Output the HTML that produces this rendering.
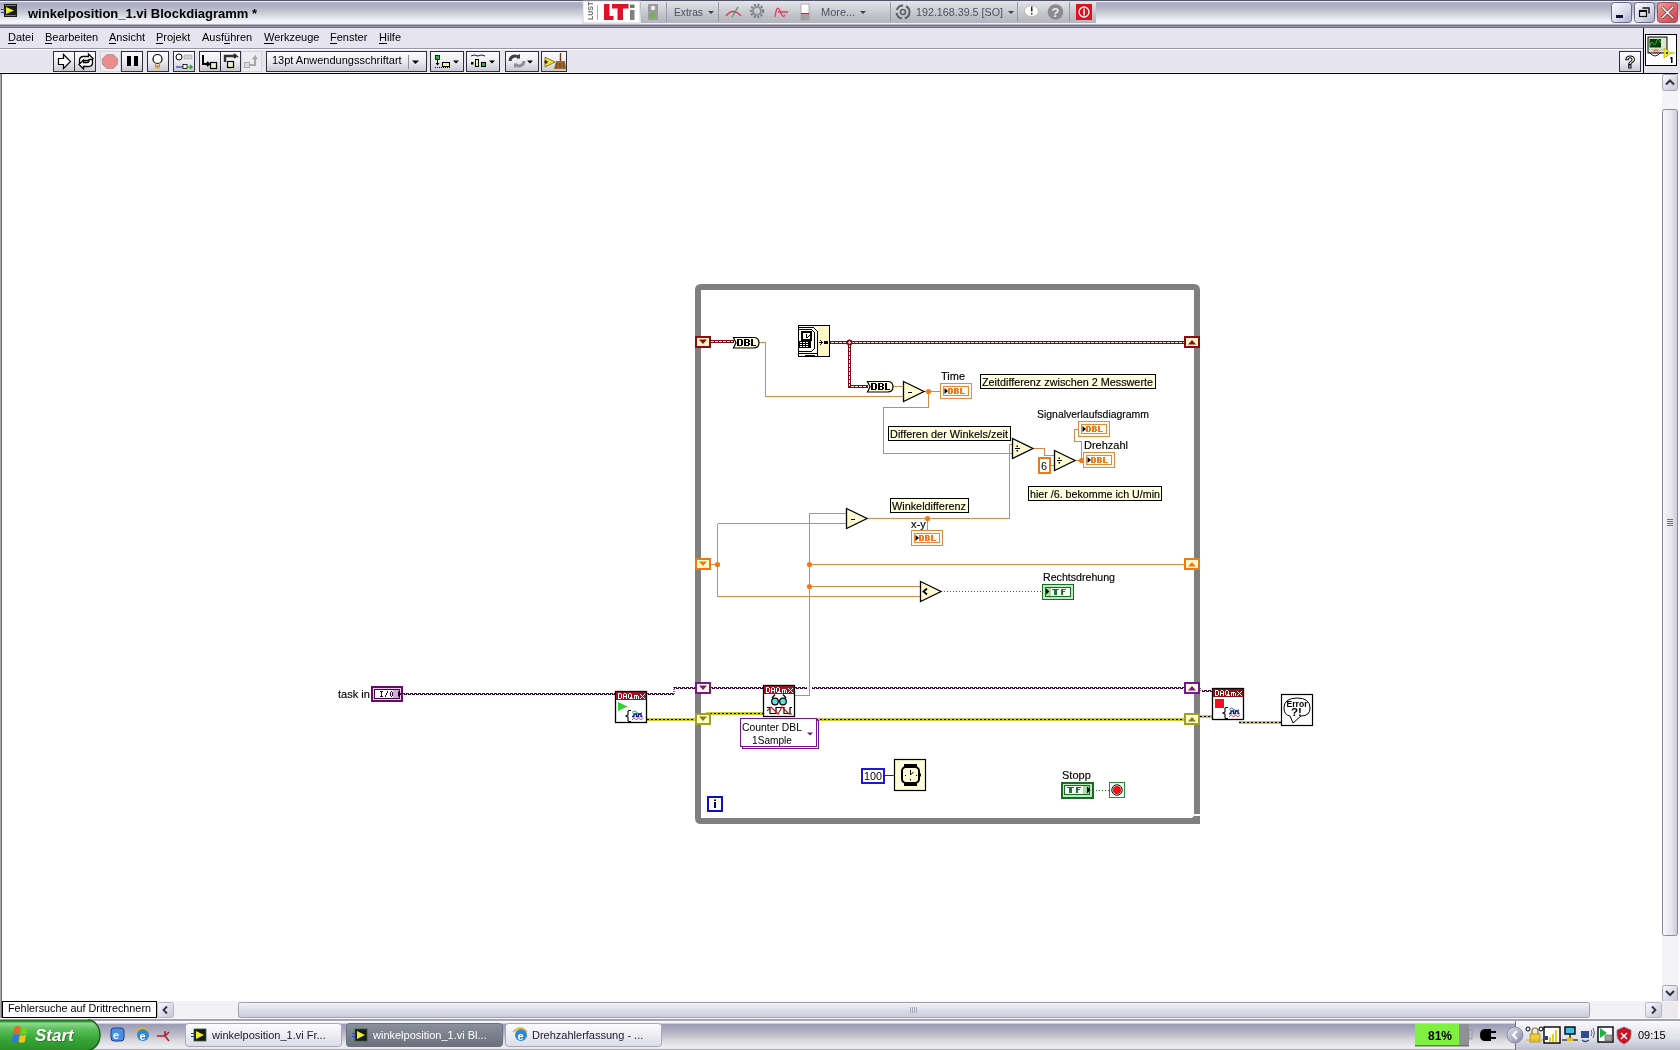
<!DOCTYPE html>
<html><head><meta charset="utf-8">
<style>
html,body{margin:0;padding:0;width:1680px;height:1050px;overflow:hidden;background:#fff;}
svg{display:block;will-change:transform;}
text{font-family:"Liberation Sans",sans-serif;}
</style></head>
<body>
<svg width="1680" height="1050" viewBox="0 0 1680 1050">
<defs>
  <linearGradient id="gTitle" x1="0" y1="0" x2="0" y2="1">
    <stop offset="0" stop-color="#a3a3b8"/>
    <stop offset="0.3" stop-color="#b4b4c9"/>
    <stop offset="0.55" stop-color="#cfd0da"/>
    <stop offset="0.8" stop-color="#eeeef8"/>
    <stop offset="1" stop-color="#fbfbff"/>
  </linearGradient>
  <linearGradient id="gBtn" x1="0" y1="0" x2="0" y2="1">
    <stop offset="0" stop-color="#fdfdff"/>
    <stop offset="0.5" stop-color="#ecebf2"/>
    <stop offset="1" stop-color="#c8c7d2"/>
  </linearGradient>
  <linearGradient id="gTb" x1="0" y1="0" x2="0" y2="1">
    <stop offset="0" stop-color="#e4e4ea"/>
    <stop offset="0.6" stop-color="#c4c4cc"/>
    <stop offset="1" stop-color="#b4b4bc"/>
  </linearGradient>
  <linearGradient id="gWb" x1="0" y1="0" x2="1" y2="1">
    <stop offset="0" stop-color="#fafaff"/>
    <stop offset="0.6" stop-color="#d8d8ea"/>
    <stop offset="1" stop-color="#a8a8cc"/>
  </linearGradient>
  <linearGradient id="gSb" x1="0" y1="0" x2="1" y2="1">
    <stop offset="0" stop-color="#fafaff"/>
    <stop offset="1" stop-color="#c4c4d6"/>
  </linearGradient>
  <linearGradient id="gThumbV" x1="0" y1="0" x2="1" y2="0">
    <stop offset="0" stop-color="#f6f6fa"/>
    <stop offset="0.6" stop-color="#e6e6ee"/>
    <stop offset="1" stop-color="#c8c8da"/>
  </linearGradient>
  <linearGradient id="gThumbH" x1="0" y1="0" x2="0" y2="1">
    <stop offset="0" stop-color="#f2f2f8"/>
    <stop offset="0.4" stop-color="#e2e2ec"/>
    <stop offset="1" stop-color="#c8c8da"/>
  </linearGradient>
  <linearGradient id="gTask" x1="0" y1="1020" x2="0" y2="1050" gradientUnits="userSpaceOnUse">
    <stop offset="0" stop-color="#707080"/>
    <stop offset="0.04" stop-color="#fafaff"/>
    <stop offset="0.1" stop-color="#f0f0f8"/>
    <stop offset="0.14" stop-color="#9c9ab4"/>
    <stop offset="0.3" stop-color="#a8a8c0"/>
    <stop offset="0.5" stop-color="#bebec8"/>
    <stop offset="0.7" stop-color="#dcdae0"/>
    <stop offset="0.9" stop-color="#ececf0"/>
    <stop offset="0.96" stop-color="#e8e8ee"/>
    <stop offset="1" stop-color="#808094"/>
  </linearGradient>
  <linearGradient id="gTray" x1="0" y1="0" x2="0" y2="1">
    <stop offset="0" stop-color="#f8f8fc"/>
    <stop offset="0.6" stop-color="#e0e0ea"/>
    <stop offset="1" stop-color="#bcbccc"/>
  </linearGradient>
  <linearGradient id="gStart" x1="0" y1="0" x2="0" y2="1">
    <stop offset="0" stop-color="#2e8a2e"/>
    <stop offset="0.12" stop-color="#8ad88a"/>
    <stop offset="0.3" stop-color="#5cc05c"/>
    <stop offset="0.6" stop-color="#3aa83a"/>
    <stop offset="1" stop-color="#2a902a"/>
  </linearGradient>
  <linearGradient id="gTaskBtn" x1="0" y1="0" x2="0" y2="1">
    <stop offset="0" stop-color="#fcfcff"/>
    <stop offset="1" stop-color="#dcdce8"/>
  </linearGradient>
  <linearGradient id="gTaskBtnA" x1="0" y1="0" x2="0" y2="1">
    <stop offset="0" stop-color="#8a909c"/>
    <stop offset="1" stop-color="#6a707c"/>
  </linearGradient>
  <linearGradient id="gChev" x1="0" y1="0" x2="1" y2="1">
    <stop offset="0" stop-color="#e0e0f0"/>
    <stop offset="1" stop-color="#8888a8"/>
  </linearGradient>
  <pattern id="pWave" x="0" y="0" width="4" height="2" patternUnits="userSpaceOnUse">
    <rect x="0" y="0" width="3" height="1" fill="#3c0a40"/>
    <rect x="2" y="1" width="2" height="1" fill="#3c0a40"/>
    <rect x="0" y="1" width="1" height="1" fill="#3c0a40"/>
  </pattern>
  <linearGradient id="gWc" x1="0" y1="0" x2="1" y2="1">
    <stop offset="0" stop-color="#f0a0a0"/>
    <stop offset="0.5" stop-color="#e06868"/>
    <stop offset="1" stop-color="#c84050"/>
  </linearGradient>
</defs>

<!-- ===== TITLE BAR ===== -->
<g id="titlebar">
  <rect x="0" y="0" width="1680" height="25" fill="url(#gTitle)"/>
  <rect x="0" y="0" width="1680" height="1" fill="#545468"/>
  <rect x="0" y="1" width="1680" height="1" fill="#eeeef6"/>
  <rect x="0" y="2" width="1680" height="2" fill="#b0b0c4"/>
  <rect x="0" y="23" width="1680" height="1" fill="#f0f0f8"/>
  <rect x="0" y="24" width="1680" height="1" fill="#b4b4c2"/>
  <rect x="0" y="25" width="1680" height="1" fill="#727282"/>
  <rect x="0" y="26" width="1680" height="1" fill="#9898a8"/>
  <rect x="0" y="27" width="1680" height="1" fill="#6c6c7c"/>
  <text x="28" y="18" font-size="13" font-weight="bold" fill="#000">winkelposition_1.vi Blockdiagramm *</text>
  <!-- title icon -->
  <rect x="4" y="4" width="13" height="13" fill="#1a1a1a"/>
  <rect x="5" y="5" width="11" height="1" fill="#40a040"/>
  <rect x="5" y="15" width="11" height="1" fill="#40a040"/>
  <path d="M6 7 l8 3.5 l-8 3.5 z" fill="#f0f020"/>
  <rect x="1" y="9" width="4" height="1" fill="#c02020"/>
  <rect x="1" y="12" width="4" height="1" fill="#2040c0"/>
  <rect x="0" y="28" width="1" height="992" fill="#a8a8a8"/>
  <rect x="1" y="28" width="1" height="992" fill="#6c6c6c"/>
  <!-- LTi toolbar -->
  <rect x="641" y="1" width="455" height="22" fill="url(#gTb)"/>
  <rect x="583" y="1" width="57" height="22" fill="#fff" stroke="#c8c8d0" stroke-width="0.8"/>
  <text transform="translate(593,20) rotate(-90)" font-size="7" fill="#606060" font-weight="bold">LUST</text>
  <rect x="597" y="5" width="1" height="15" fill="#b0b0b0"/>
  <path d="M604 4 h5.5 v12 h4 v4 h-9.5 z M612 4 h16.5 v4.5 h-5.5 v11.5 h-5.5 v-11.5 h-5.5 z" fill="#e01028"/>
  <rect x="630" y="10" width="4.5" height="10" fill="#808080"/>
  <rect x="630" y="4.5" width="4.5" height="3.5" fill="#608060"/>
  <!-- traffic light -->
  <rect x="648" y="4" width="10" height="16" fill="#9a9a9a" rx="1"/>
  <circle cx="653" cy="8" r="2.2" fill="#f0f0f0"/>
  <circle cx="653" cy="15.5" r="2.5" fill="#60c040"/>
  <rect x="666" y="2" width="1" height="20" fill="#9a9aa4"/>
  <text x="674" y="16" font-size="11" fill="#505060" textLength="29" lengthAdjust="spacingAndGlyphs">Extras</text>
  <path d="M708 11 h6 l-3 3 z" fill="#404050"/>
  <rect x="718" y="2" width="1" height="20" fill="#9a9aa4"/>
  <!-- curve icon -->
  <path d="M726 16 q7 -9 15 0" fill="none" stroke="#d04060" stroke-width="1.3"/>
  <path d="M732 17 l6 -10" fill="none" stroke="#409060" stroke-width="1.2"/>
  <!-- gear -->
  <circle cx="757" cy="11" r="6" fill="none" stroke="#808088" stroke-width="2.5" stroke-dasharray="2 1.5"/>
  <circle cx="757" cy="11" r="4" fill="none" stroke="#909098" stroke-width="2"/>
  <!-- sine -->
  <path d="M775 17 q2 -14 5 -6 t5 4 M778 12 h10" fill="none" stroke="#e04060" stroke-width="1.3"/>
  <!-- slider -->
  <rect x="801" y="4" width="8" height="16" fill="#fff" stroke="#a0a0a8" stroke-width="0.8"/>
  <rect x="801" y="13" width="8" height="1.5" fill="#c02030"/>
  <rect x="801" y="15" width="8" height="5" fill="#a0a0a8"/>
  <text x="821" y="16" font-size="11" fill="#505060">More...</text>
  <path d="M860 11 h6 l-3 3 z" fill="#404050"/>
  <rect x="890" y="2" width="1" height="20" fill="#9a9aa4"/>
  <!-- connection icon -->
  <circle cx="903" cy="12" r="6.5" fill="none" stroke="#606068" stroke-width="2" stroke-dasharray="8 3"/>
  <circle cx="903" cy="12" r="2.5" fill="none" stroke="#606068" stroke-width="1.6"/>
  <text x="916" y="16" font-size="11" fill="#505060" textLength="87" lengthAdjust="spacingAndGlyphs">192.168.39.5 [SO]</text>
  <path d="M1008 11 h6 l-3 3 z" fill="#404050"/>
  <rect x="1017" y="2" width="1" height="20" fill="#9a9aa4"/>
  <ellipse cx="1031.5" cy="11" rx="7" ry="5.5" fill="#fff" stroke="#b0b0b0" stroke-width="0.8"/>
  <rect x="1031" y="6.5" width="1.5" height="5" fill="#202020"/>
  <rect x="1031" y="13" width="1.5" height="1.5" fill="#202020"/>
  <circle cx="1055.5" cy="12" r="7.8" fill="#8c8c90"/>
  <text x="1051.5" y="17" font-size="13" font-weight="bold" fill="#f0f0f0">?</text>
  <rect x="1069" y="2" width="1" height="20" fill="#9a9aa4"/>
  <rect x="1076" y="4" width="16" height="16" fill="#e0101c"/>
  <circle cx="1084" cy="12" r="5" fill="none" stroke="#fff" stroke-width="1.3"/>
  <rect x="1083.3" y="8.5" width="1.5" height="7" fill="#fff"/>
  <!-- window controls -->
  <rect x="1611.5" y="2.5" width="20" height="20" rx="3" fill="url(#gWb)" stroke="#6a6a88"/>
  <rect x="1616" y="15" width="7" height="3" fill="#101030"/>
  <rect x="1634.5" y="2.5" width="20" height="20" rx="3" fill="url(#gWb)" stroke="#6a6a88"/>
  <rect x="1639.5" y="10.5" width="7" height="6" fill="none" stroke="#101010" stroke-width="1.2"/>
  <rect x="1639.5" y="10.5" width="7" height="1.5" fill="#101010"/>
  <path d="M1642.5 8 h6.5 v5.5" fill="none" stroke="#101010" stroke-width="1.4"/>
  <rect x="1657.5" y="2.5" width="20" height="20" rx="3" fill="url(#gWc)" stroke="#a05058"/>
  <path d="M1662 7 l11 11 M1673 7 l-11 11" stroke="#502020" stroke-width="2.6"/>
  <path d="M1662 7 l11 11 M1673 7 l-11 11" stroke="#fff" stroke-width="1.6"/>

</g>

<!-- ===== MENU BAR ===== -->
<g id="menubar">
  <rect x="0" y="28" width="1680" height="20" fill="#e6e4ee"/>
  <rect x="0" y="48" width="1680" height="1" fill="#9a98a8"/>
  <rect x="0" y="49" width="1680" height="1" fill="#ffffff"/>
  <rect x="0" y="50" width="1680" height="23" fill="#e6e4ee"/>
  <rect x="0" y="72" width="1680" height="1" fill="#f4f4f8"/>
  <rect x="0" y="73" width="1678" height="1" fill="#000"/>
  <g font-size="11" fill="#000">
    <text x="8" y="41">Datei</text>
    <text x="45" y="41">Bearbeiten</text>
    <text x="109" y="41">Ansicht</text>
    <text x="156" y="41">Projekt</text>
    <text x="202" y="41">Ausführen</text>
    <text x="264" y="41">Werkzeuge</text>
    <text x="330" y="41">Fenster</text>
    <text x="379" y="41">Hilfe</text>
  </g>
  <g fill="#000" shape-rendering="crispEdges">
    <rect x="8" y="43" width="8" height="1"/>
    <rect x="45" y="43" width="7" height="1"/>
    <rect x="109" y="43" width="7" height="1"/>
    <rect x="156" y="43" width="7" height="1"/>
    <rect x="224" y="43" width="6" height="1"/>
    <rect x="264" y="43" width="10" height="1"/>
    <rect x="330" y="43" width="7" height="1"/>
    <rect x="379" y="43" width="8" height="1"/>
  </g>
</g>

<!-- ===== TOOLBAR ===== -->
<g id="toolbar" shape-rendering="crispEdges">
  <!-- run / run cont -->
  <rect x="53.5" y="51.5" width="42" height="20" fill="url(#gBtn)" stroke="#303038"/>
  <line x1="74.5" y1="51" x2="74.5" y2="72" stroke="#303038"/>
  <!-- abort (disabled flat) -->
  <rect x="100.5" y="51.5" width="20" height="20" fill="#ececf2" stroke="#d4d4dc"/>
  <!-- pause -->
  <rect x="121.5" y="51.5" width="21" height="20" fill="url(#gBtn)" stroke="#303038"/>
  <!-- bulb -->
  <rect x="147.5" y="51.5" width="21" height="20" fill="url(#gBtn)" stroke="#303038"/>
  <!-- retain -->
  <rect x="173.5" y="51.5" width="21" height="20" fill="url(#gBtn)" stroke="#303038"/>
  <!-- step into / over -->
  <rect x="199.5" y="51.5" width="41" height="20" fill="url(#gBtn)" stroke="#303038"/>
  <line x1="220.5" y1="51" x2="220.5" y2="72" stroke="#303038"/>
  <!-- step out disabled -->
  <rect x="241.5" y="51.5" width="20" height="20" fill="#ececf2" stroke="#d4d4dc"/>
  <!-- font dropdown -->
  <rect x="266.5" y="51.5" width="160" height="20" fill="url(#gBtn)" stroke="#303038"/>
  <line x1="408.5" y1="55" x2="408.5" y2="69" stroke="#909098"/>
  <!-- align/distribute/reorder/cleanup -->
  <rect x="430.5" y="51.5" width="33" height="20" fill="url(#gBtn)" stroke="#303038"/>
  <rect x="466.5" y="51.5" width="33" height="20" fill="url(#gBtn)" stroke="#303038"/>
  <rect x="505.5" y="51.5" width="33" height="20" fill="url(#gBtn)" stroke="#303038"/>
  <rect x="541.5" y="51.5" width="25" height="20" fill="url(#gBtn)" stroke="#303038"/>
  <!-- help -->
  <rect x="1619.5" y="51.5" width="21" height="20" fill="url(#gBtn)" stroke="#303038"/>
  <line x1="1643.5" y1="28" x2="1643.5" y2="73" stroke="#000"/>
  <rect x="1645.5" y="33.5" width="31" height="31" fill="#fff" stroke="#000"/>
</g>
<g id="toolbar-icons">
  <!-- run arrow -->
  <path d="M58.5 58.5 h5 v-4 l7 7 l-7 7 v-4 h-5 z" fill="#fff" stroke="#000" stroke-width="1.2"/>
  <!-- run continuously -->
  <path d="M79.5 63.5 v-3 q0 -4 4 -4 h5 v-2.5 l4.5 4.5 l-4.5 4.5 v-2.5 h-4 q-1.5 0 -1.5 1.5 v1.5 z" fill="#fff" stroke="#000" stroke-width="1.3"/>
  <path d="M92.5 59.5 v3 q0 4 -4 4 h-5 v2.5 l-4.5 -4.5 l4.5 -4.5 v2.5 h4 q1.5 0 1.5 -1.5 v-1.5 z" fill="#fff" stroke="#000" stroke-width="1.3"/>
  <!-- abort stop sign -->
  <path d="M107 54.5 h6 l4.5 4.5 v5 l-4.5 4.5 h-6 l-4.5 -4.5 v-5 z" fill="#ec8c8c" stroke="#c09898" stroke-width="1.2"/>
  <!-- pause bars -->
  <rect x="127" y="56" width="4" height="10" fill="#000"/>
  <rect x="134" y="56" width="4" height="10" fill="#000"/>
  <!-- bulb -->
  <circle cx="157.5" cy="59" r="4.5" fill="#fff" stroke="#000" stroke-width="1.2"/>
  <path d="M155.5 63 v3 h4 v-3 M155 66.5 h5 M155.5 68 h4" fill="none" stroke="#c89020" stroke-width="1.2"/>
  <!-- retain wire values -->
  <circle cx="179" cy="57" r="3" fill="#fff" stroke="#000"/>
  <rect x="184" y="55" width="8" height="4" fill="#d0d0d0" stroke="#a0a0a0" stroke-width="0.6"/>
  <line x1="176" y1="67" x2="185" y2="67" stroke="#2040c0" stroke-width="1.2"/>
  <rect x="183" y="64.5" width="4" height="4" fill="#fff" stroke="#000" stroke-width="0.8"/>
  <path d="M187 67 h5 l-2 -2 m2 2 l-2 2" stroke="#20a020" fill="none" stroke-width="1.2"/>
  <!-- step into -->
  <path d="M203 55 v9 h6 l-2 -2 m2 2 l-2 2" fill="none" stroke="#000" stroke-width="2"/>
  <rect x="210.5" y="62.5" width="6" height="6" fill="#f0f0c0" stroke="#000" stroke-width="1.2"/>
  <!-- step over -->
  <path d="M225 62 v-6 h11 l-2 -2 m2 2 l-2 2" fill="none" stroke="#303030" stroke-width="2.4"/>
  <rect x="227.5" y="61.5" width="6" height="6" fill="#f0f0c0" stroke="#000" stroke-width="1.2"/>
  <!-- step out (disabled) -->
  <rect x="244.5" y="62.5" width="5" height="5" fill="#ddd" stroke="#aaa"/>
  <path d="M250 65 h5 v-8 l-2 2 m2 -2 l2 2" fill="none" stroke="#a8a8a8" stroke-width="2"/>
  <!-- font dropdown text -->
  <text x="272" y="64" font-size="11" fill="#000">13pt Anwendungsschriftart</text>
  <path d="M412 60.5 h7 l-3.5 3.5 z" fill="#000"/>
  <!-- align -->
  <rect x="435.5" y="55.5" width="4" height="4" fill="#30b040" stroke="#000" stroke-width="0.8"/>
  <path d="M437.5 60 v5" stroke="#000" stroke-width="1"/>
  <path d="M435.5 63 l2 2.5 l2 -2.5 z" fill="#000"/>
  <path d="M435 67.5 h15" stroke="#000" stroke-width="1" stroke-dasharray="1 1"/>
  <rect x="442.5" y="62.5" width="7" height="4" fill="#f4f080" stroke="#000" stroke-width="1"/>
  <path d="M453 60.5 h6 l-3 3 z" fill="#000"/>
  <!-- distribute -->
  <path d="M471 56 q3.5 -2 7 0 q3.5 -2 7 0" stroke="#000" fill="none" stroke-width="0.9"/>
  <rect x="471" y="62" width="2.5" height="2.5" fill="#000"/>
  <rect x="475.5" y="59.5" width="3" height="7" fill="#f4f080" stroke="#000" stroke-width="1"/>
  <rect x="481.5" y="62.5" width="4" height="4" fill="#30b040" stroke="#000" stroke-width="1"/>
  <path d="M489 60.5 h6 l-3 3 z" fill="#000"/>
  <!-- reorder -->
  <path d="M510 61 a5 5 0 0 1 9 -3" fill="none" stroke="#404048" stroke-width="3"/>
  <path d="M516 56 l4 -2 l0 5 z" fill="#404048"/>
  <path d="M524 61 a5 5 0 0 1 -9 3" fill="none" stroke="#909098" stroke-width="3"/>
  <path d="M518 66 l-4 2 l0 -5 z" fill="#909098"/>
  <path d="M527 60.5 h6 l-3 3 z" fill="#000"/>
  <!-- clean up -->
  <path d="M545 57 l10 5 l-10 5 z" fill="#f0e030" stroke="#706010" stroke-width="0.8"/>
  <path d="M544 62 h4 m-2 -2 v4" stroke="#000" stroke-width="0.9"/>
  <path d="M560.5 53 v8" stroke="#703818" stroke-width="1.4"/>
  <path d="M556 61 h9 l1 8 h-12 z" fill="#9a6830"/>
  <path d="M557 63 l-1 5 M560 63 v5 M563 63 l1 5" stroke="#5a3810" stroke-width="0.7"/>
  <!-- help ? -->
  <text x="1625" y="68" font-size="17" fill="#fff" stroke="#000" stroke-width="1" font-weight="bold">?</text>
  <!-- VI icon -->
  <rect x="1644" y="28" width="36" height="45" fill="#e6e4ee"/>
  <rect x="1645.5" y="34.5" width="31" height="31" fill="#fff" stroke="#000" stroke-width="1"/>
  <rect x="1648" y="37" width="19" height="16" fill="#d8e8d0" stroke="#000" stroke-width="1"/>
  <rect x="1649.5" y="39" width="11.5" height="8.5" fill="#0a3a10"/>
  <path d="M1650 46 q1.5 -6 3 -3 q1.5 4 3 0 q1.5 -6 3 -3 q1 3 2 2" fill="none" stroke="#30c040" stroke-width="0.9"/>
  <path d="M1649 52 q6 8 12 0" fill="none" stroke="#1020a0" stroke-width="1"/>
  <circle cx="1656" cy="51.5" r="1.8" fill="none" stroke="#c02020" stroke-width="0.9"/>
  <path d="M1651 50 h12" stroke="#f0a060" stroke-width="1"/>
  <path d="M1664 48 l7.5 5 l-7.5 5 z" fill="#f0f020" stroke="#a0a010" stroke-width="0.6"/>
  <path d="M1671 53 h4" stroke="#a0a010" stroke-width="1"/>
  <circle cx="1667" cy="53" r="1" fill="#000"/>
  <rect x="1671" y="57" width="1.5" height="6" fill="#000"/>
  <rect x="1670" y="57.5" width="1" height="1" fill="#000"/>
</g>

<!-- ===== CANVAS ===== -->
<rect x="2" y="74" width="1660" height="927" fill="#fff"/>

<!-- ===== DIAGRAM ===== -->
<g id="diagram">
  <!-- While loop frame -->
  <path fill="#7f7f7f" fill-rule="evenodd" d="M701 284 H1194 Q1200 284 1200 290 V814 H1194 V290 H701 V818 H1192 L1194 816 H1200 V824 H701 Q695 824 695 818 V290 Q695 284 701 284 Z"/>

  <!-- ========== WIRES ========== -->
  <!-- orange DBL wires (1px) -->
  <g stroke="#d48a48" stroke-width="1" fill="none" shape-rendering="crispEdges">
    <path d="M759 342.5 H765.5 V396.5 H903"/>
    <path d="M893 386.5 H903"/>
    <path d="M924 391.5 H940"/>
    <path d="M928.5 391 V407.5 H883.5 V453.5 H1012"/>
    <path d="M867 518.5 H1009.5 V444.5 H1012"/>
    <path d="M927.5 518 V530"/>
    <path d="M1033 448.5 H1044.5 V455.5 H1054"/>
    <path d="M1051 465.5 H1054"/>
    <path d="M1075 460.5 H1083"/>
    <path d="M1081.5 460 V441.5 H1074.5 V429.5 H1078"/>
    <path d="M710 564.5 H717.5"/>
    <path d="M717.5 523.5 V596.5"/>
    <path d="M717.5 523.5 H847"/>
    <path d="M717.5 596.5 H920"/>
    <path d="M795 695.5 H809.5 V513.5 H847"/>
    <path d="M809.5 564.5 H1184"/>
    <path d="M809.5 586.5 H920"/>
  </g>
  <!-- junction dots -->
  <g fill="#f07a1a">
    <circle cx="928.5" cy="391.5" r="2.6"/>
    <circle cx="1081.5" cy="460.5" r="2.6"/>
    <circle cx="927.5" cy="518.5" r="2.6"/>
    <circle cx="717.5" cy="564.5" r="2.6"/>
    <circle cx="809.5" cy="564.5" r="2.6"/>
    <circle cx="809.5" cy="586.5" r="2.6"/>
  </g>
  <!-- red timestamp wires -->
  <g shape-rendering="crispEdges">
    <rect x="710" y="340" width="24" height="3" fill="#7c0a14"/>
    <rect x="830" y="341" width="354" height="3" fill="#7c0a14"/>
    <rect x="848" y="341" width="3" height="46" fill="#7c0a14"/>
    <rect x="848" y="385" width="20" height="3" fill="#7c0a14"/>
  </g>
  <g stroke="#fff4f4" stroke-width="1" stroke-dasharray="3 1" fill="none" shape-rendering="crispEdges">
    <path d="M711 341.5 H733"/>
    <path d="M831 342.5 H1184"/>
    <path d="M849.5 344 V386"/>
    <path d="M851 386.5 H867"/>
  </g>
  <circle cx="849.5" cy="342.5" r="3" fill="#7c0a14"/>
  <circle cx="849.5" cy="342.5" r="1.2" fill="#fff4f4"/>
  <!-- purple task wires -->
  <g fill="url(#pWave)" shape-rendering="crispEdges">
    <rect x="403" y="693" width="212" height="2"/>
    <rect x="647" y="693" width="27" height="2"/>
    <rect x="674" y="687" width="21" height="2"/>
    <rect x="710" y="687" width="54" height="2"/>
    <rect x="795" y="687" width="12" height="2"/>
    <rect x="812" y="687" width="372" height="2"/>
    <rect x="1202" y="690" width="10" height="2"/>
  </g>
  <path d="M674 687 v8 M1200 688 v3" stroke="#3c0a40" stroke-width="1.2" stroke-dasharray="1 1"/>
  <!-- error wires -->
  <g shape-rendering="crispEdges">
    <rect x="647" y="718" width="48" height="3" fill="#c8c83c"/>
    <rect x="706" y="712" width="58" height="3" fill="#c8c83c"/>
    <rect x="792" y="718" width="392" height="3" fill="#c8c83c"/>
    <rect x="1200" y="715" width="12" height="3" fill="#c8c83c"/>
    <rect x="1239" y="721" width="42" height="3" fill="#c8c83c"/>
  </g>
  <g stroke="#000" stroke-width="1" stroke-dasharray="2 2" fill="none" shape-rendering="crispEdges">
    <path d="M647 719.5 H695"/>
    <path d="M706 713.5 H764"/>
    <path d="M792 719.5 H1184"/>
    <path d="M1200 716.5 H1212"/>
    <path d="M1239 722.5 H1281"/>
  </g>
  <!-- green boolean dotted wires -->
  <g stroke="#1a7a2a" stroke-width="1" stroke-dasharray="1 2" fill="none" shape-rendering="crispEdges">
    <path d="M941 591.5 H1042"/>
    <path d="M1093 790.5 H1109"/>
  </g>
  <!-- blue I32 wire -->
  <path d="M885 775.5 H894" stroke="#2020c0" stroke-width="1" shape-rendering="crispEdges"/>

  <!-- ========== NODES ========== -->
  <!-- shift registers -->
  <g shape-rendering="crispEdges">
    <!-- red -->
    <rect x="696" y="337" width="14" height="10" fill="#fff4c4" stroke="#8c0c14" stroke-width="2"/>
    <rect x="1185" y="337" width="14" height="10" fill="#fff4c4" stroke="#8c0c14" stroke-width="2"/>
    <!-- orange -->
    <rect x="696" y="559" width="14" height="10" fill="#fff8c8" stroke="#f07810" stroke-width="2"/>
    <rect x="1185" y="559" width="14" height="10" fill="#fff8c8" stroke="#f07810" stroke-width="2"/>
    <!-- purple -->
    <rect x="696" y="683" width="14" height="10" fill="#fffcd8" stroke="#7a1490" stroke-width="2"/>
    <rect x="1185" y="683" width="14" height="10" fill="#fffcd8" stroke="#7a1490" stroke-width="2"/>
    <!-- error -->
    <rect x="696" y="714" width="14" height="10" fill="#ffffc4" stroke="#a0a028" stroke-width="2"/>
    <rect x="1185" y="714" width="14" height="10" fill="#ffffc4" stroke="#a0a028" stroke-width="2"/>
  </g>
  <path d="M699 339.5 h8 l-4 4.5 z" fill="#8c0c14"/>
  <path d="M1188 344.5 h8 l-4 -4.5 z" fill="#8c0c14"/>
  <path d="M699 561.5 h8 l-4 4.5 z" fill="#f07810"/>
  <path d="M1188 566.5 h8 l-4 -4.5 z" fill="#f07810"/>
  <path d="M699 685.5 h8 l-4 4.5 z" fill="#7a1490"/>
  <path d="M1188 690.5 h8 l-4 -4.5 z" fill="#7a1490"/>
  <path d="M699 716.5 h8 l-4 4.5 z" fill="#808018"/>
  <path d="M1188 721.5 h8 l-4 -4.5 z" fill="#808018"/>

  <!-- DBL conversion nodes -->
  <g stroke="#000" stroke-width="1.2" fill="#fffce0">
    <path d="M733.5 337.5 h20 q5.5 0 5.5 5.25 q0 5.25 -5.5 5.25 h-20 l2.5 -5.25 z"/>
    <path d="M867.5 381.5 h20 q5.5 0 5.5 5.25 q0 5.25 -5.5 5.25 h-20 l2.5 -5.25 z"/>
  </g>
  <path shape-rendering="crispEdges" fill="#000" d="M737 339h5v1h-5zM737 340h2v1h-2zM741 340h2v1h-2zM737 341h2v1h-2zM741 341h2v1h-2zM737 342h2v1h-2zM741 342h2v1h-2zM737 343h2v1h-2zM741 343h2v1h-2zM737 344h2v1h-2zM741 344h2v1h-2zM737 345h5v1h-5zM744 339h5v1h-5zM744 340h2v1h-2zM748 340h2v1h-2zM744 341h2v1h-2zM748 341h2v1h-2zM744 342h5v1h-5zM744 343h2v1h-2zM748 343h2v1h-2zM744 344h2v1h-2zM748 344h2v1h-2zM744 345h5v1h-5zM751 339h2v1h-2zM751 340h2v1h-2zM751 341h2v1h-2zM751 342h2v1h-2zM751 343h2v1h-2zM751 344h2v1h-2zM751 345h5v1h-5zM871 383h5v1h-5zM871 384h2v1h-2zM875 384h2v1h-2zM871 385h2v1h-2zM875 385h2v1h-2zM871 386h2v1h-2zM875 386h2v1h-2zM871 387h2v1h-2zM875 387h2v1h-2zM871 388h2v1h-2zM875 388h2v1h-2zM871 389h5v1h-5zM878 383h5v1h-5zM878 384h2v1h-2zM882 384h2v1h-2zM878 385h2v1h-2zM882 385h2v1h-2zM878 386h5v1h-5zM878 387h2v1h-2zM882 387h2v1h-2zM878 388h2v1h-2zM882 388h2v1h-2zM878 389h5v1h-5zM885 383h2v1h-2zM885 384h2v1h-2zM885 385h2v1h-2zM885 386h2v1h-2zM885 387h2v1h-2zM885 388h2v1h-2zM885 389h5v1h-5z"/>

  <!-- timestamp node -->
  <g shape-rendering="crispEdges" fill="#000">
    <rect x="798" y="325" width="32" height="32" fill="#fffef4"/>
    <rect x="818" y="326" width="11" height="30" fill="#fcf8c8"/>
    <rect x="798" y="325" width="32" height="1"/>
    <rect x="798" y="356" width="32" height="1"/>
    <rect x="798" y="325" width="1" height="32"/>
    <rect x="829" y="325" width="1" height="32"/>
    <rect x="817" y="331" width="1" height="25"/>
    <rect x="799" y="327" width="15" height="1"/>
    <rect x="814" y="328" width="1" height="1"/>
    <rect x="815" y="329" width="1" height="1"/>
    <rect x="816" y="330" width="1" height="1"/>
    <rect x="799" y="329" width="13" height="1"/>
    <rect x="812" y="330" width="1" height="1"/>
    <rect x="813" y="331" width="1" height="1"/>
    <rect x="814" y="332" width="1" height="17"/>
    <rect x="813" y="349" width="1" height="1"/>
    <rect x="812" y="350" width="1" height="1"/>
    <rect x="799" y="351" width="13" height="1"/>
    <rect x="799" y="353" width="18" height="1"/>
    <rect x="805" y="355" width="10" height="1"/>
    <rect x="801" y="331" width="11" height="2"/>
    <rect x="801" y="339" width="11" height="2"/>
    <rect x="801" y="331" width="2" height="10"/>
    <rect x="810" y="331" width="2" height="10"/>
    <rect x="806" y="334" width="1" height="4"/>
    <rect x="807" y="337" width="1" height="1"/>
    <rect x="808" y="336" width="1" height="1"/>
    <rect x="809" y="335" width="1" height="1"/>
    <rect x="799" y="341" width="12" height="7"/>
    <rect x="824" y="341" width="4" height="3"/>
    <rect x="819" y="342" width="3" height="1"/>
    <rect x="820" y="340" width="1" height="1"/>
    <rect x="821" y="341" width="1" height="3"/>
    <rect x="822" y="342" width="1" height="1"/>
    <rect x="820" y="344" width="1" height="1"/>
  </g>
  <g shape-rendering="crispEdges" fill="#fffef4">
    <rect x="803" y="333" width="7" height="6" fill="#fffcd8"/>
    <rect x="806" y="334" width="1" height="4" fill="#000"/>
    <rect x="807" y="337" width="1" height="1" fill="#000"/>
    <rect x="808" y="336" width="1" height="1" fill="#000"/>
    <rect x="809" y="335" width="1" height="1" fill="#000"/>
    <rect x="800" y="342" width="2" height="1"/><rect x="803" y="342" width="2" height="1"/><rect x="806" y="342" width="2" height="1"/>
    <rect x="800" y="344" width="2" height="1"/><rect x="803" y="344" width="2" height="1"/><rect x="806" y="344" width="2" height="1"/>
    <rect x="800" y="346" width="2" height="1"/><rect x="803" y="346" width="2" height="1"/><rect x="806" y="346" width="2" height="1"/>
  </g>

  <!-- arithmetic triangles -->
  <g fill="#fffcd4" stroke="#000" stroke-width="1.3" stroke-linejoin="miter">
    <path d="M903.5 381.5 L924 391.5 L903.5 401.5 Z"/>
    <path d="M1012.5 438.5 L1033 448.5 L1012.5 458.5 Z"/>
    <path d="M1054.5 450.5 L1075 460.5 L1054.5 470.5 Z"/>
    <path d="M846.5 508.5 L867 518.5 L846.5 528.5 Z"/>
    <path d="M920.5 581.5 L941 591.5 L920.5 601.5 Z"/>
  </g>
  <g stroke="#000" fill="none">
    <path d="M908 392.5 h4" stroke-width="1"/>
    <path d="M851 519.5 h4" stroke-width="1"/>
    <path d="M1015 448.5 h5 M1054 470" stroke-width="1"/>
    <path d="M1057 460.5 h5" stroke-width="1"/>
    <path d="M927 588.5 l-3.5 3 l3.5 3" stroke-width="1.8"/>
  </g>
  <g fill="#000">
    <rect x="1016.5" y="445.5" width="1.5" height="1.5"/>
    <rect x="1016.5" y="450" width="1.5" height="1.5"/>
    <rect x="1058.5" y="457.5" width="1.5" height="1.5"/>
    <rect x="1058.5" y="462" width="1.5" height="1.5"/>
  </g>

  <!-- numeric constant 6 -->
  <rect x="1039" y="458" width="11" height="15" fill="#fff" stroke="#f07810" stroke-width="2" shape-rendering="crispEdges"/>
  <text x="1041" y="470" font-size="11" fill="#000">6</text>
  <!-- constant 100 -->
  <rect x="862" y="768.5" width="22" height="14" fill="#fff" stroke="#1a1ad0" stroke-width="2" shape-rendering="crispEdges"/>
  <text x="864" y="780" font-size="11" fill="#000" textLength="18" lengthAdjust="spacingAndGlyphs">100</text>

  <!-- DBL indicators -->
  <g id="ind" fill="none" stroke="#e08a3a" stroke-width="1" shape-rendering="crispEdges">
    <rect x="940.5" y="383.5" width="31" height="15" fill="#fffaf0"/>
    <rect x="943.5" y="386.5" width="25" height="9"/>
    <rect x="1078.5" y="421.5" width="31" height="15" fill="#fffaf0"/>
    <rect x="1081.5" y="424.5" width="25" height="9"/>
    <rect x="1083.5" y="452.5" width="31" height="15" fill="#fffaf0"/>
    <rect x="1086.5" y="455.5" width="25" height="9"/>
    <rect x="911.5" y="530.5" width="31" height="15" fill="#fffaf0"/>
    <rect x="914.5" y="533.5" width="25" height="9"/>
  </g>
  <g fill="#000">
    <path d="M944.5 388 l3.5 3 l-3.5 3 z"/>
    <path d="M1082.5 426 l3.5 3 l-3.5 3 z"/>
    <path d="M1087.5 457 l3.5 3 l-3.5 3 z"/>
    <path d="M915.5 535 l3.5 3 l-3.5 3 z"/>
  </g>
  <path shape-rendering="crispEdges" fill="#f07a1a" d="M948 388h4v1h-4zM948 389h2v1h-2zM951 389h2v1h-2zM948 390h2v1h-2zM951 390h2v1h-2zM948 391h2v1h-2zM951 391h2v1h-2zM948 392h2v1h-2zM951 392h2v1h-2zM948 393h4v1h-4zM954 388h4v1h-4zM954 389h2v1h-2zM957 389h2v1h-2zM954 390h4v1h-4zM954 391h2v1h-2zM957 391h2v1h-2zM954 392h2v1h-2zM957 392h2v1h-2zM954 393h4v1h-4zM960 388h2v1h-2zM960 389h2v1h-2zM960 390h2v1h-2zM960 391h2v1h-2zM960 392h2v1h-2zM960 393h5v1h-5zM1086 426h4v1h-4zM1086 427h2v1h-2zM1089 427h2v1h-2zM1086 428h2v1h-2zM1089 428h2v1h-2zM1086 429h2v1h-2zM1089 429h2v1h-2zM1086 430h2v1h-2zM1089 430h2v1h-2zM1086 431h4v1h-4zM1092 426h4v1h-4zM1092 427h2v1h-2zM1095 427h2v1h-2zM1092 428h4v1h-4zM1092 429h2v1h-2zM1095 429h2v1h-2zM1092 430h2v1h-2zM1095 430h2v1h-2zM1092 431h4v1h-4zM1098 426h2v1h-2zM1098 427h2v1h-2zM1098 428h2v1h-2zM1098 429h2v1h-2zM1098 430h2v1h-2zM1098 431h5v1h-5zM1091 457h4v1h-4zM1091 458h2v1h-2zM1094 458h2v1h-2zM1091 459h2v1h-2zM1094 459h2v1h-2zM1091 460h2v1h-2zM1094 460h2v1h-2zM1091 461h2v1h-2zM1094 461h2v1h-2zM1091 462h4v1h-4zM1097 457h4v1h-4zM1097 458h2v1h-2zM1100 458h2v1h-2zM1097 459h4v1h-4zM1097 460h2v1h-2zM1100 460h2v1h-2zM1097 461h2v1h-2zM1100 461h2v1h-2zM1097 462h4v1h-4zM1103 457h2v1h-2zM1103 458h2v1h-2zM1103 459h2v1h-2zM1103 460h2v1h-2zM1103 461h2v1h-2zM1103 462h5v1h-5zM919 535h4v1h-4zM919 536h2v1h-2zM922 536h2v1h-2zM919 537h2v1h-2zM922 537h2v1h-2zM919 538h2v1h-2zM922 538h2v1h-2zM919 539h2v1h-2zM922 539h2v1h-2zM919 540h4v1h-4zM925 535h4v1h-4zM925 536h2v1h-2zM928 536h2v1h-2zM925 537h4v1h-4zM925 538h2v1h-2zM928 538h2v1h-2zM925 539h2v1h-2zM928 539h2v1h-2zM925 540h4v1h-4zM931 535h2v1h-2zM931 536h2v1h-2zM931 537h2v1h-2zM931 538h2v1h-2zM931 539h2v1h-2zM931 540h5v1h-5z"/>

  <!-- Boolean indicator Rechtsdrehung -->
  <rect x="1042.5" y="584.5" width="31" height="15" fill="#b8ecb8" stroke="#1a6a2a" stroke-width="1" shape-rendering="crispEdges"/>
  <rect x="1045.5" y="587.5" width="25" height="9" fill="#f8fff8" stroke="#1a6a2a" stroke-width="1" shape-rendering="crispEdges"/>
  <rect x="1046" y="588" width="5" height="8" fill="#a8dca8"/>
  <path d="M1046 588.5 l3.5 3 l-3.5 3 z" fill="#000"/>
  <path shape-rendering="crispEdges" fill="#1a7a2a" d="M1052 589h7v1h-7zM1054 590h3v1h-3zM1054 591h3v1h-3zM1054 592h3v1h-3zM1054 593h3v1h-3zM1054 594h3v1h-3zM1061 589h5v1h-5zM1061 590h2v1h-2zM1061 591h4v1h-4zM1061 592h2v1h-2zM1061 593h2v1h-2zM1061 594h2v1h-2z"/>
  <!-- Boolean control Stopp -->
  <rect x="1061.5" y="782.5" width="31" height="15" fill="#b8ecb8" stroke="#1a6a2a" stroke-width="2" shape-rendering="crispEdges"/>
  <rect x="1064.5" y="785.5" width="25" height="9" fill="#f8fff8" stroke="#1a6a2a" stroke-width="1" shape-rendering="crispEdges"/>
  <rect x="1083" y="786" width="6" height="8" fill="#a8dca8"/>
  <path d="M1087 786.5 l3.5 3.5 l-3.5 3.5 z" fill="#000"/>
  <path shape-rendering="crispEdges" fill="#1a7a2a" d="M1067 787h7v1h-7zM1069 788h3v1h-3zM1069 789h3v1h-3zM1069 790h3v1h-3zM1069 791h3v1h-3zM1069 792h3v1h-3zM1076 787h5v1h-5zM1076 788h2v1h-2zM1076 789h4v1h-4zM1076 790h2v1h-2zM1076 791h2v1h-2zM1076 792h2v1h-2z"/>
  <!-- stop terminal -->
  <rect x="1109.5" y="782.5" width="15" height="15" fill="#f0fff0" stroke="#2a8a3a" stroke-width="1" shape-rendering="crispEdges"/>
  <circle cx="1117" cy="790" r="5.2" fill="#fff" stroke="#000" stroke-width="1"/>
  <circle cx="1117" cy="790" r="4" fill="#f01010"/>

  <!-- iteration terminal -->
  <rect x="708" y="797" width="14" height="14" fill="#fffff0" stroke="#1010c0" stroke-width="2" shape-rendering="crispEdges"/>
  <rect x="714" y="802" width="2" height="6" fill="#000060"/>
  <rect x="714" y="799.5" width="2" height="1.5" fill="#000060"/>

  <!-- wait node -->
  <rect x="894.5" y="759.5" width="31" height="31" fill="#fffcd8" stroke="#000" stroke-width="1.2"/>
  <rect x="904" y="764" width="13" height="3" fill="#000"/>
  <rect x="904" y="783" width="13" height="3" fill="#000"/>
  <rect x="902" y="767" width="17" height="16" rx="4" fill="#fffcd8" stroke="#000" stroke-width="2"/>
  <rect x="919" y="773.5" width="2" height="3" fill="#000"/>
  <path d="M910.5 770 v5 l3 -3" fill="none" stroke="#000" stroke-width="1"/>
  <g fill="#000"><rect x="905" y="775" width="1" height="1"/><rect x="916" y="775" width="1" height="1"/><rect x="910" y="779" width="1" height="1.5"/></g>

  <!-- DAQmx Start -->
  <g>
    <rect x="615.5" y="691.5" width="31" height="31" fill="#fff" stroke="#000" stroke-width="1.3"/>
    <rect x="616" y="692" width="30" height="8" fill="#a01020"/>
    <path shape-rendering="crispEdges" fill="#fff" d="M618 693h3v1h-3zM618 694h1v1h-1zM621 694h1v1h-1zM618 695h1v1h-1zM621 695h1v1h-1zM618 696h1v1h-1zM621 696h1v1h-1zM618 697h1v1h-1zM621 697h1v1h-1zM618 698h3v1h-3zM624 693h2v1h-2zM623 694h1v1h-1zM626 694h1v1h-1zM623 695h1v1h-1zM626 695h1v1h-1zM623 696h4v1h-4zM623 697h1v1h-1zM626 697h1v1h-1zM623 698h1v1h-1zM626 698h1v1h-1zM629 693h2v1h-2zM628 694h1v1h-1zM631 694h1v1h-1zM628 695h1v1h-1zM631 695h1v1h-1zM628 696h1v1h-1zM631 696h1v1h-1zM628 697h1v1h-1zM630 697h2v1h-2zM629 698h4v1h-4zM634 695h4v1h-4zM634 696h1v1h-1zM636 696h1v1h-1zM638 696h1v1h-1zM634 697h1v1h-1zM636 697h1v1h-1zM638 697h1v1h-1zM634 698h1v1h-1zM636 698h1v1h-1zM638 698h1v1h-1zM640 694h1v1h-1zM644 694h1v1h-1zM641 695h1v1h-1zM643 695h1v1h-1zM642 696h1v1h-1zM641 697h1v1h-1zM643 697h1v1h-1zM640 698h1v1h-1zM644 698h1v1h-1z"/>
    <path d="M618 702 l9.5 4.5 l-9.5 4.5 z" fill="#30d030"/>
    <path d="M631 710.5 h-2 q-1 0 -1 1 v3.5 l-2 1 l2 1 v3.5 q0 1 1 1 h2" fill="none" stroke="#000" stroke-width="1.1"/>
    <path d="M632 712.5 q2.5 -3 5 0 t5 0" fill="none" stroke="#20a060" stroke-width="1"/>
    <path d="M632 716.5 h2 v-2.5 h2.5 v2.5 h2 v-2.5 h2.5 v2.5 h1.5" fill="none" stroke="#101090" stroke-width="1.3"/>
    <path d="M632 720 l2.2 -2.2 l2.2 2.2 l2.2 -2.2 l2.2 2.2 l2.2 -2.2" fill="none" stroke="#d03030" stroke-width="0.9"/>
  </g>
  <!-- DAQmx Read -->
  <g>
    <rect x="763.5" y="685.5" width="31" height="31" fill="#fff" stroke="#000" stroke-width="1.3"/>
    <rect x="764" y="686" width="30" height="8" fill="#a01020"/>
    <path shape-rendering="crispEdges" fill="#fff" d="M766 687h3v1h-3zM766 688h1v1h-1zM769 688h1v1h-1zM766 689h1v1h-1zM769 689h1v1h-1zM766 690h1v1h-1zM769 690h1v1h-1zM766 691h1v1h-1zM769 691h1v1h-1zM766 692h3v1h-3zM772 687h2v1h-2zM771 688h1v1h-1zM774 688h1v1h-1zM771 689h1v1h-1zM774 689h1v1h-1zM771 690h4v1h-4zM771 691h1v1h-1zM774 691h1v1h-1zM771 692h1v1h-1zM774 692h1v1h-1zM777 687h2v1h-2zM776 688h1v1h-1zM779 688h1v1h-1zM776 689h1v1h-1zM779 689h1v1h-1zM776 690h1v1h-1zM779 690h1v1h-1zM776 691h1v1h-1zM778 691h2v1h-2zM777 692h4v1h-4zM782 689h4v1h-4zM782 690h1v1h-1zM784 690h1v1h-1zM786 690h1v1h-1zM782 691h1v1h-1zM784 691h1v1h-1zM786 691h1v1h-1zM782 692h1v1h-1zM784 692h1v1h-1zM786 692h1v1h-1zM788 688h1v1h-1zM792 688h1v1h-1zM789 689h1v1h-1zM791 689h1v1h-1zM790 690h1v1h-1zM789 691h1v1h-1zM791 691h1v1h-1zM788 692h1v1h-1zM792 692h1v1h-1z"/>
    <circle cx="775" cy="701.5" r="3.3" fill="#60e0e0" stroke="#000" stroke-width="1.2"/>
    <circle cx="783" cy="701.5" r="3.3" fill="#60e0e0" stroke="#000" stroke-width="1.2"/>
    <path d="M778.3 701 h1.5 M772 698 l3 -3.5 M786 698 l-3 -3.5" stroke="#000" stroke-width="1.2"/>
    <path d="M767 707.5 h3 v6 h6 v-6 h8 v6 h6 v-6 h2" fill="none" stroke="#000" stroke-width="1.2"/>
    <path d="M767 711 l4 -4 l7 7 l4 -7 l7 7 h3" fill="none" stroke="#d01010" stroke-width="1.1"/>
  </g>
  <!-- DAQmx Clear -->
  <g>
    <rect x="1212.5" y="688.5" width="31" height="31" fill="#fff" stroke="#000" stroke-width="1.3"/>
    <rect x="1213" y="689" width="30" height="8" fill="#8c1010"/>
    <path shape-rendering="crispEdges" fill="#fff" d="M1215 690h3v1h-3zM1215 691h1v1h-1zM1218 691h1v1h-1zM1215 692h1v1h-1zM1218 692h1v1h-1zM1215 693h1v1h-1zM1218 693h1v1h-1zM1215 694h1v1h-1zM1218 694h1v1h-1zM1215 695h3v1h-3zM1221 690h2v1h-2zM1220 691h1v1h-1zM1223 691h1v1h-1zM1220 692h1v1h-1zM1223 692h1v1h-1zM1220 693h4v1h-4zM1220 694h1v1h-1zM1223 694h1v1h-1zM1220 695h1v1h-1zM1223 695h1v1h-1zM1226 690h2v1h-2zM1225 691h1v1h-1zM1228 691h1v1h-1zM1225 692h1v1h-1zM1228 692h1v1h-1zM1225 693h1v1h-1zM1228 693h1v1h-1zM1225 694h1v1h-1zM1227 694h2v1h-2zM1226 695h4v1h-4zM1231 692h4v1h-4zM1231 693h1v1h-1zM1233 693h1v1h-1zM1235 693h1v1h-1zM1231 694h1v1h-1zM1233 694h1v1h-1zM1235 694h1v1h-1zM1231 695h1v1h-1zM1233 695h1v1h-1zM1235 695h1v1h-1zM1237 691h1v1h-1zM1241 691h1v1h-1zM1238 692h1v1h-1zM1240 692h1v1h-1zM1239 693h1v1h-1zM1238 694h1v1h-1zM1240 694h1v1h-1zM1237 695h1v1h-1zM1241 695h1v1h-1z"/>
    <rect x="1215" y="699" width="9" height="9" fill="#f01020"/>
    <path d="M1228 707.5 h-2 q-1 0 -1 1 v3.5 l-2 1 l2 1 v3.5 q0 1 1 1 h2" fill="none" stroke="#000" stroke-width="1.1"/>
    <path d="M1229 709.5 q2.5 -3 5 0 t5 0" fill="none" stroke="#20a060" stroke-width="1"/>
    <path d="M1229 713.5 h2 v-2.5 h2.5 v2.5 h2 v-2.5 h2.5 v2.5 h1.5" fill="none" stroke="#101090" stroke-width="1.3"/>
    <path d="M1229 717 l2.2 -2.2 l2.2 2.2 l2.2 -2.2 l2.2 2.2 l2.2 -2.2" fill="none" stroke="#d03030" stroke-width="0.9"/>
  </g>
  <!-- Error handler -->
  <g>
    <rect x="1281.5" y="694.5" width="31" height="31" fill="#fff" stroke="#000" stroke-width="1.2"/>
    <path d="M1290 716 q-6 -1 -6 -8 q0 -10 13 -10 q13 0 13 10 q0 8 -9 8 l-8 7 z" fill="#fff" stroke="#000" stroke-width="1"/>
    <text x="1286.5" y="706.5" font-size="9" font-weight="bold" font-family="Liberation Mono" fill="#000" textLength="21" lengthAdjust="spacingAndGlyphs">Error</text>
    <text x="1291" y="715.5" font-size="10" font-weight="bold" font-family="Liberation Mono" fill="#000" textLength="11" lengthAdjust="spacingAndGlyphs">?!</text>
  </g>

  <!-- task in control -->
  <rect x="372" y="687" width="30" height="14" fill="#f4c8f4" stroke="#6a0a6a" stroke-width="2" shape-rendering="crispEdges"/>
  <rect x="374.5" y="689.5" width="25" height="9" fill="#fff" stroke="#400840" stroke-width="1" shape-rendering="crispEdges"/>
  <rect x="393" y="690" width="6" height="8" fill="#d8a8d8"/>
  <path shape-rendering="crispEdges" fill="#400840" d="M380 691h3v1h-3zM381 692h1v1h-1zM381 693h1v1h-1zM381 694h1v1h-1zM381 695h1v1h-1zM380 696h3v1h-3zM387 691h1v1h-1zM387 692h1v1h-1zM386 693h1v1h-1zM386 694h1v1h-1zM385 695h1v1h-1zM385 696h1v1h-1zM391 691h1v1h-1zM390 692h1v1h-1zM392 692h1v1h-1zM390 693h1v1h-1zM392 693h1v1h-1zM390 694h1v1h-1zM392 694h1v1h-1zM390 695h1v1h-1zM392 695h1v1h-1zM391 696h1v1h-1z"/>
  <path d="M398 691 l3.5 3 l-3.5 3 z" fill="#000"/>

  <!-- ring constant -->
  <rect x="742.5" y="720.5" width="76" height="28" fill="#fff" stroke="#7a1490" stroke-width="1"/>
  <rect x="740.5" y="718.5" width="76" height="28" fill="#fff" stroke="#7a1490" stroke-width="1"/>
  <text x="742" y="731" font-size="11" fill="#000" textLength="60" lengthAdjust="spacingAndGlyphs">Counter DBL</text>
  <text x="752" y="744" font-size="11" fill="#000" textLength="40" lengthAdjust="spacingAndGlyphs">1Sample</text>
  <path d="M807 732.5 h6 l-3 3 z" fill="#7a1490"/>

  <!-- comments -->
  <g fill="#ffffe0" stroke="#000" stroke-width="1" shape-rendering="crispEdges">
    <rect x="980.5" y="374.5" width="175" height="14"/>
    <rect x="888.5" y="426.5" width="122" height="14"/>
    <rect x="890.5" y="498.5" width="78" height="14"/>
    <rect x="1028.5" y="486.5" width="133" height="14"/>
  </g>
  <g font-size="11" fill="#000" stroke="#000" stroke-width="0.15">
    <text x="982" y="385.5" textLength="171" lengthAdjust="spacingAndGlyphs">Zeitdifferenz zwischen 2 Messwerte</text>
    <text x="890" y="437.5" textLength="118" lengthAdjust="spacingAndGlyphs">Differen der Winkels/zeit</text>
    <text x="892" y="509.5" textLength="74" lengthAdjust="spacingAndGlyphs">Winkeldifferenz</text>
    <text x="1030" y="497.5" textLength="130" lengthAdjust="spacingAndGlyphs">hier /6. bekomme ich U/min</text>
  </g>
  <!-- labels -->
  <g font-size="11" fill="#000" stroke="#000" stroke-width="0.15">
    <text x="941" y="380">Time</text>
    <text x="1037" y="418" textLength="112" lengthAdjust="spacingAndGlyphs">Signalverlaufsdiagramm</text>
    <text x="1084" y="449">Drehzahl</text>
    <text x="911" y="528">x-y</text>
    <text x="1043" y="581" textLength="72" lengthAdjust="spacingAndGlyphs">Rechtsdrehung</text>
    <text x="1062" y="779">Stopp</text>
    <text x="338" y="697.5">task in</text>
  </g>
</g>

<!-- ===== SCROLLBARS ===== -->
<g id="scrollbars">
  <!-- vertical track -->
  <rect x="1662" y="74" width="16" height="928" fill="#f4f4f8"/>
  <rect x="1678" y="74" width="2" height="946" fill="#fbfbfd"/>
  <rect x="1662.5" y="74.5" width="15" height="16" rx="2" fill="url(#gSb)" stroke="#a8a8b4"/>
  <path d="M1666 84.5 l4 -4 l4 4" fill="none" stroke="#303040" stroke-width="2"/>
  <rect x="1662.5" y="109.5" width="15" height="826" rx="2" fill="url(#gThumbV)" stroke="#8c8c98"/>
  <path d="M1667 519.5 h6 M1667 521.5 h6 M1667 523.5 h6 M1667 525.5 h6" stroke="#707078"/>
  <rect x="1662.5" y="985.5" width="15" height="16" rx="2" fill="url(#gSb)" stroke="#a8a8b4"/>
  <path d="M1666 991 l4 4 l4 -4" fill="none" stroke="#303040" stroke-width="2"/>
  <!-- horizontal -->
  <rect x="2" y="1001" width="1676" height="19" fill="#f2f2f6"/>
  <rect x="2.5" y="1001.5" width="154" height="16" fill="#fff" stroke="#000"/>
  <text x="8" y="1012" font-size="11" fill="#000" textLength="143" lengthAdjust="spacingAndGlyphs">Fehlersuche auf Drittrechnern</text>
  <rect x="157.5" y="1002.5" width="16" height="15" rx="2" fill="url(#gSb)" stroke="#b8b8c8"/>
  <path d="M167 1006.5 l-3.5 3.5 l3.5 3.5" fill="none" stroke="#303040" stroke-width="1.8"/>
  <rect x="238.5" y="1002.5" width="1351" height="15" rx="2" fill="url(#gThumbH)" stroke="#a0a0b0"/>
  <path d="M910.5 1007 v6 M912.5 1007 v6 M914.5 1007 v6 M916.5 1007 v6" stroke="#a8a8b8"/>
  <rect x="1645.5" y="1002.5" width="16" height="15" rx="2" fill="url(#gSb)" stroke="#b8b8c8"/>
  <path d="M1652 1006.5 l3.5 3.5 l-3.5 3.5" fill="none" stroke="#303040" stroke-width="1.8"/>
  <rect x="1662" y="1002" width="16" height="16" fill="#ece8ec"/>
  <rect x="0" y="1018" width="1680" height="1" fill="#f8f8fc"/>
  <rect x="0" y="1019" width="1680" height="1" fill="#a0a0b0"/>
</g>

<!-- ===== TASKBAR ===== -->
<g id="taskbar">
  <rect x="0" y="1020" width="1680" height="30" fill="url(#gTask)"/>

  <!-- start button -->
  <path d="M0 1020 h88 a12 15 0 0 1 0 30 h-88 z" fill="url(#gStart)"/>
  <path d="M88 1020 a12 15 0 0 1 0 30" fill="none" stroke="#185818" stroke-width="1.4"/>
  <rect x="0" y="1020" width="90" height="1.5" fill="#1f7a1f"/>
  <g transform="translate(11,1026) skewX(-12)">
    <path d="M4 1 q3 -1.5 6 0 v7 q-3 -1.5 -6 0 z" fill="#f06020"/>
    <path d="M11 1 q3 1.5 6 0 v7 q-3 1.5 -6 0 z" fill="#70d020"/>
    <path d="M4 9 q3 -1.5 6 0 v7 q-3 -1.5 -6 0 z" fill="#3a70f0"/>
    <path d="M11 9 q3 1.5 6 0 v7 q-3 1.5 -6 0 z" fill="#f0c818"/>
  </g>
  <text x="35" y="1041" font-size="17" font-weight="bold" font-style="italic" fill="#2a5a2a" opacity="0.6" transform="translate(1,1)">Start</text>
  <text x="35" y="1041" font-size="17" font-weight="bold" font-style="italic" fill="#fff">Start</text>
  <!-- quick launch -->
  <rect x="111" y="1028" width="13" height="13" rx="3" fill="#4a90e0" stroke="#1a3a90"/>
  <text x="113" y="1039" font-size="11" font-weight="bold" fill="#fff">e</text>
  <circle cx="143" cy="1035" r="6" fill="#2a8ad8"/>
  <text x="139.5" y="1039.5" font-size="11" font-weight="bold" fill="#fff">e</text>
  <path d="M135 1032 q8 -8 14 0" fill="none" stroke="#f0b020" stroke-width="1.4"/>
  <path d="M157 1036 h8 l4 -4 m-4 4 l4 5 m-4 -5 v-5" fill="none" stroke="#b02030" stroke-width="1.6"/>
  <!-- task buttons -->
  <rect x="185.5" y="1023.5" width="156" height="23" rx="3" fill="url(#gTaskBtn)" stroke="#a8a8b8"/>
  <rect x="346.5" y="1023.5" width="156" height="23" rx="3" fill="url(#gTaskBtnA)" stroke="#6a7080"/>
  <rect x="505.5" y="1023.5" width="156" height="23" rx="3" fill="url(#gTaskBtn)" stroke="#a8a8b8"/>
  <g id="tbicon1" transform="translate(194,1029)">
    <rect x="0" y="0" width="12" height="12" fill="#1a1a1a" stroke="#306030" stroke-width="0.8"/>
    <path d="M2 2 l8 4 l-8 4 z" fill="#f0f020"/>
    <rect x="-3" y="4" width="3" height="1" fill="#c02020"/>
    <rect x="-3" y="7" width="3" height="1" fill="#2040c0"/>
  </g>
  <g transform="translate(355,1029)">
    <rect x="0" y="0" width="12" height="12" fill="#1a1a1a" stroke="#306030" stroke-width="0.8"/>
    <path d="M2 2 l8 4 l-8 4 z" fill="#f0f020"/>
    <rect x="-3" y="4" width="3" height="1" fill="#c02020"/>
    <rect x="-3" y="7" width="3" height="1" fill="#2040c0"/>
  </g>
  <circle cx="521" cy="1035" r="6" fill="#2a8ad8"/>
  <text x="517.5" y="1039.5" font-size="11" font-weight="bold" fill="#fff">e</text>
  <path d="M513 1032 q8 -8 14 0" fill="none" stroke="#f0b020" stroke-width="1.4"/>
  <g font-size="11">
    <text x="212" y="1039" fill="#202030">winkelposition_1.vi Fr...</text>
    <text x="373" y="1039" fill="#fff">winkelposition_1.vi Bl...</text>
    <text x="532" y="1039" fill="#202030">Drehzahlerfassung - ...</text>
  </g>
  <!-- battery -->
  <rect x="1415" y="1024" width="44" height="22" fill="#80f040"/>
  <rect x="1459" y="1024" width="10" height="22" fill="#909098"/>
  <rect x="1415" y="1045" width="54" height="1.5" fill="#707078"/>
  <rect x="1469" y="1030" width="3" height="9" fill="#c0c0c8" stroke="#808088" stroke-width="0.6"/>
  <text x="1428" y="1040" font-size="12" font-weight="bold" fill="#000">81%</text>
  <!-- plug -->
  <path d="M1482 1035 h3 M1485 1030 q-4 0 -4 5 q0 5 4 5 h5 v-10 z M1490 1032 h6 M1490 1038 h6" fill="#000" stroke="#000" stroke-width="2"/>
  <!-- tray -->
  <rect x="1515" y="1021" width="165" height="29" fill="url(#gTray)"/>
  <rect x="1515" y="1021" width="1" height="29" fill="#707080"/>
  <circle cx="1515" cy="1035" r="8" fill="url(#gChev)" stroke="#9090a8"/>
  <path d="M1517 1031 l-4 4 l4 4" fill="none" stroke="#fff" stroke-width="2"/>
  <g transform="translate(1526,1027)">
    <circle cx="2" cy="2" r="2" fill="none" stroke="#000"/>
    <circle cx="15" cy="2" r="2" fill="none" stroke="#000"/>
    <rect x="4" y="7" width="10" height="8" fill="#f0d030" stroke="#907010" stroke-width="0.6"/>
    <path d="M6 7 v-3 a3 3 0 0 1 6 0 v3" fill="none" stroke="#907010" stroke-width="1.2"/>
    <path d="M0 13 h18" stroke="#d0b030"/>
  </g>
  <g transform="translate(1544,1027)">
    <rect x="0" y="0" width="16" height="16" fill="#fff" stroke="#000" stroke-width="1.4"/>
    <rect x="5" y="10" width="2" height="5" fill="#e0d020"/>
    <rect x="8" y="7" width="2" height="8" fill="#e0d020"/>
    <rect x="11" y="3" width="2" height="12" fill="#e0d020"/>
    <rect x="1" y="9" width="3" height="4" fill="#2040a0"/>
  </g>
  <g transform="translate(1562,1027)">
    <rect x="3" y="0" width="10" height="7" fill="#40c0e0" stroke="#000" stroke-width="1.4"/>
    <path d="M8 7 v4 M0 13 h16" stroke="#000" stroke-width="1.2"/>
    <rect x="5" y="11" width="6" height="3" fill="#e0c020"/>
  </g>
  <g transform="translate(1580,1028)">
    <rect x="1" y="3" width="8" height="7" fill="#304a90"/>
    <path d="M2 12 q3 3 7 0" stroke="#304a90" fill="none" stroke-width="1.4"/>
    <path d="M11 2 q2 3 0 6 M13 0 q3 5 0 10" stroke="#606070" fill="none"/>
  </g>
  <g transform="translate(1598,1027)">
    <rect x="0" y="0" width="15" height="15" fill="#fff" stroke="#000" stroke-width="1.4"/>
    <path d="M2 1 l7 5 l-7 5 z" fill="#20b040"/>
    <rect x="7" y="8" width="7" height="6" fill="#a0a0a0" stroke="#606060" stroke-width="0.6"/>
  </g>
  <g transform="translate(1617,1027)">
    <path d="M7 0 l7 3 v5 q0 6 -7 9 q-7 -3 -7 -9 v-5 z" fill="#d01020" stroke="#808090" stroke-width="0.8"/>
    <path d="M4 6 l6 6 M10 6 l-6 6" stroke="#fff" stroke-width="1.6"/>
  </g>
  <text x="1638" y="1039" font-size="11" fill="#000">09:15</text>
</g>
</svg>
</body></html>
